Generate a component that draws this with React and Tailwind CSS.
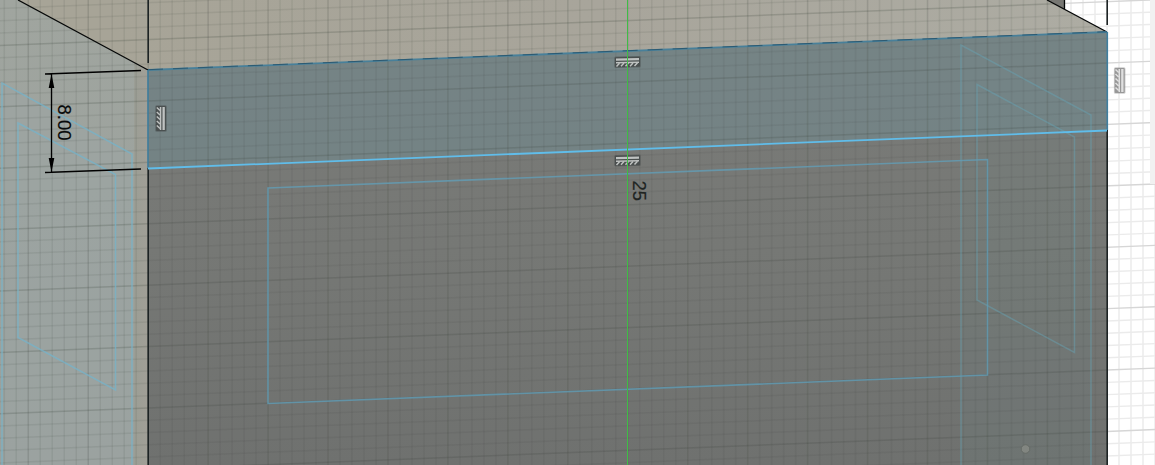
const SLOPE = -0.0395;
const verticals = Array.from({ length: 98 }, (_, i) => ({ x: 4.3 + i * 11.99, major: i % 5 === 2 }));
const horizontals = Array.from({ length: 46 }, (_, i) => ({ y: -28.3 + i * 12.28, major: i % 5 === 1 }));

function Grid({ x1, x2, color, majorOpacity, minorOpacity, clip }) {
  return (
    <g clipPath={clip} stroke={color} strokeWidth="1.5">
      {verticals
        .filter((l) => l.x >= x1 && l.x <= x2)
        .map((l) => (
          <line
            key={`v${l.x}`}
            x1={l.x}
            x2={l.x}
            y1="0"
            y2="465"
            strokeOpacity={l.major ? majorOpacity * 0.85 : minorOpacity}
          />
        ))}
      {horizontals.map((l) => (
        <line
          key={`h${l.y}`}
          x1={x1}
          x2={x2}
          y1={l.y + SLOPE * x1}
          y2={l.y + SLOPE * x2}
          strokeOpacity={l.major ? majorOpacity : minorOpacity}
        />
      ))}
    </g>
  );
}

/* Horizontal/vertical constraint glyph: a bar resting on a hatched strip. */
function Constraint({ transform, light = false }) {
  const edge = light ? "#858585" : "#454a4a";
  const fill = light ? "#e0e0e0" : "#bfc2c1";
  return (
    <g transform={transform}>
      <rect x="-13.300" y="-5.800" width="26.600" height="11.600" rx="1.500" fill={edge} fillOpacity={light ? 0.4 : 0.45} />
      <rect x="-12.500" y="-5" width="25" height="10" rx="1" fill={edge} fillOpacity={light ? 0.75 : 0.8} />
      <rect x="-11.500" y="-3.800" width="23" height="2.300" fill={fill} />
      <rect x="-11.500" y="-0.300" width="23" height="1.500" fill={fill} />
      <path
        d="M-11 4.200L-8 1M-6.500 4.200L-3.500 1M-2 4.200L1 1M2.500 4.200L5.500 1M7 4.200L10 1"
        stroke={fill}
        strokeWidth="1.500"
      />
    </g>
  );
}

export default function App() {
  return (
    <main className="h-[465px] w-full overflow-hidden bg-white">
      <svg className="block h-[465px] w-[1155px]" viewBox="0 0 1155 465" fill="none">
        <defs>
          <linearGradient id="left" x1="0" y1="0" x2="0" y2="1">
            <stop stopColor="#a0a59f" />
            <stop offset="0.4" stopColor="#9da39e" />
            <stop offset="1" stopColor="#9ba09d" />
          </linearGradient>
          <linearGradient id="top" gradientUnits="userSpaceOnUse" x1="100" y1="0" x2="1100" y2="0">
            <stop stopColor="#a7a497" />
            <stop offset="0.5" stopColor="#a8a59b" />
            <stop offset="1" stopColor="#adaca3" />
          </linearGradient>
          <linearGradient id="front" x1="0" y1="0" x2="0" y2="1">
            <stop stopColor="#7a7b78" />
            <stop offset="0.5" stopColor="#767875" />
            <stop offset="1" stopColor="#6f716f" />
          </linearGradient>
          <linearGradient id="strip" x1="0" y1="0" x2="1" y2="0">
            <stop stopColor="#9b9e95" />
            <stop offset="1" stopColor="#a19f97" />
          </linearGradient>
          <clipPath id="upper">
            <path d="M0 0H1047L1107 32L148 70V465H0Z" />
          </clipPath>
          <clipPath id="face">
            <path d="M148 70L1107 32V465H148Z" />
          </clipPath>
          <clipPath id="open">
            <path d="M1064 0H1155V465H1107V32L1064 9Z" />
          </clipPath>
        </defs>

        {/* Open background with its grid */}
        <g clipPath="url(#open)">
          {[1071, 1083, 1095, 1107, 1119, 1131, 1143, 1155].map((x) => (
            <line key={x} x1={x} x2={x} y1="0" y2="465" stroke="#f0f0f0" strokeWidth="2" />
          ))}
          {horizontals.map((l) => (
            <line
              key={l.y}
              x1="1060"
              x2="1155"
              y1={l.y + SLOPE * 1060}
              y2={l.y + SLOPE * 1155}
              stroke={l.major ? "#d6d6d6" : "#ebebeb"}
              strokeWidth="1.4"
            />
          ))}
        </g>
        <rect x="1150" y="0" width="5" height="184" fill="#f1f1f1" />

        {/* Faces of the body */}
        <path d="M0 0H18L148 70V465H0Z" fill="url(#left)" />
        <path d="M2 83L132 154V465H2Z" fill="#9aa6a7" fillOpacity="0.35" />
        <path d="M134 62L148 70V465H134Z" fill="url(#strip)" />
        <path d="M18 0H1047L1107 32L148 70Z" fill="url(#top)" />
        <path d="M1047 0H1064V9Z" fill="#777773" />
        <path d="M148 70L1107 32V465H148Z" fill="url(#front)" />
        <path d="M961 45L1091 115V465H961Z" fill="#6e8585" fillOpacity="0.15" />
        <path d="M148 70L1107 32V130L148 168Z" fill="#718f95" fillOpacity="0.48" />

        <Grid x1={0} x2={1107} clip="url(#upper)" color="#30382f" majorOpacity={0.19} minorOpacity={0.085} />
        <Grid x1={148} x2={1107} clip="url(#face)" color="#30382f" majorOpacity={0.16} minorOpacity={0.075} />

        {/* Projected sketch profiles */}
        <g stroke="#76b3ca" strokeWidth="1.5" strokeOpacity="0.75">
          <path d="M2 465V83L132 154V465" />
          <path d="M18 123L115.500 174.500V390L18 337.500Z" />
        </g>
        <g stroke="#65a3b5" strokeWidth="1.5" strokeOpacity="0.45">
          <path d="M961 465V45L1091 115V465" />
          <path d="M977 84.500L1074.500 137V352.500L977 300Z" />
        </g>
        <path d="M268 188L987.500 159.500V375L268 403.500Z" stroke="#629db6" strokeWidth="1.6" strokeOpacity="0.8" />

        {/* Body edges */}
        <path d="M18 0L148 70M1047 0L1107 32M1064.500 0V9" stroke="#050707" strokeWidth="1.3" />
        <path d="M148.200 0V63M148.200 168V465M1107.200 0V25M1107.200 130V465" stroke="#1d2324" strokeWidth="1.6" />
        <path d="M148 70V168M1107.300 32V130" stroke="#407f9f" strokeWidth="1.6" />
        <path d="M148 70L1107 32" stroke="#48809a" strokeWidth="1.8" />
        <path d="M148 69.700L1107 31.700" stroke="#28566e" strokeWidth="0.9" strokeDasharray="15 10" />
        <path d="M148 168.500L1107 130.500" stroke="#60bdea" strokeWidth="1.8" />

        <Constraint transform="translate(627.5 62) skewY(-1)" />
        <Constraint transform="translate(627.5 160.500) skewY(-1)" />
        <Constraint transform="translate(161 118.500) rotate(90)" />
        <Constraint transform="translate(1119.700 80.500) rotate(90)" light />

        <path d="M627.500 0V465" stroke="#3fbd45" strokeWidth="1" />

        {/* Linear dimension */}
        <path d="M45 74L141 70.500M45 172.500L141 169M51.500 74V172" stroke="#000" strokeWidth="1.3" />
        <path d="M51.500 74L48.700 88H54.300ZM51.500 172L48.700 158H54.300Z" fill="#000" />
        <g className="font-['Liberation_Sans',sans-serif] text-[18.5px]">
          <text transform="translate(58.300 104.500) rotate(90)" fill="#080a0a" stroke="#080a0a" strokeWidth="0.2">8.00</text>
          <text transform="translate(633 180.500) rotate(90)" fill="#202422" stroke="#202422" strokeWidth="0.2">25</text>
        </g>

        <circle cx="1025.500" cy="449" r="4.300" fill="#828681" stroke="#666c67" strokeWidth="1" />
      </svg>
    </main>
  );
}
